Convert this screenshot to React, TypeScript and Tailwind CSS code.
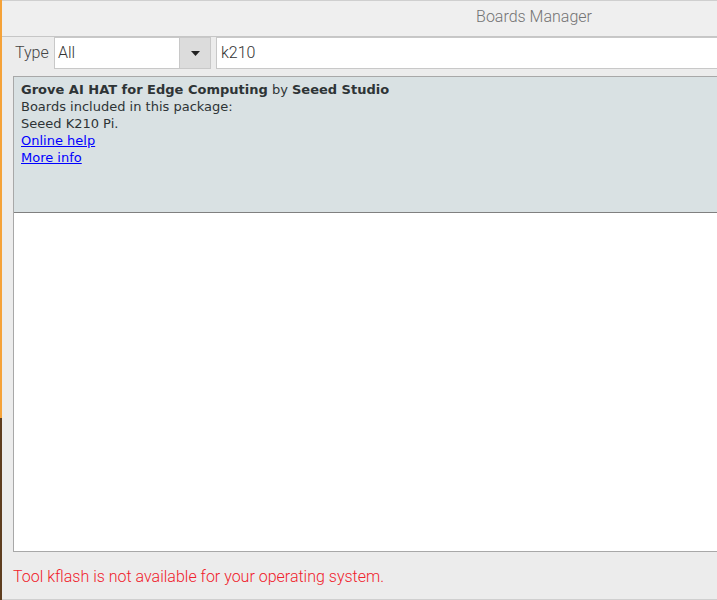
import React from "react";

export default function App() {
  return (
    <div className="flex w-[717px] h-[600px] overflow-hidden bg-[#ececec]">
      <div className="flex flex-col w-[2px] shrink-0">
        <div className="h-[418px] bg-[#f5a238]" />
        <div className="flex-1 bg-[#5e3d1f]" />
      </div>
      <div className="flex flex-col flex-1 min-w-0 border-t border-b border-[#cfcfcf] font-['Roboto',sans-serif]">
        <div className="h-[36px] shrink-0 bg-[#efefef] border-b border-[#c6c6c6] flex items-center">
          <div className="w-[1064px] shrink-0 text-center text-[16px] text-[#737373] font-light pb-[4px]">Boards Manager</div>
        </div>
        <div className="flex items-center h-[32px] shrink-0">
          <div className="w-[52px] pl-[13px] text-[16px] text-[#444] font-light">Type</div>
          <div className="flex w-[157px] h-[32px] border border-[#c8c8c8] bg-white">
            <div className="flex-1 pl-[3px] text-[16px] text-[#333] font-light leading-[30px]">All</div>
            <div className="w-[31px] bg-[#dcdcdc] border-l border-[#c8c8c8] flex items-center justify-center">
              <svg width="9" height="5" viewBox="0 0 9 5"><path d="M0 0h9L4.5 5z" fill="#222" /></svg>
            </div>
          </div>
          <div className="ml-[5px] flex-1 h-[32px] border border-[#c8c8c8] border-r-0 bg-white pl-[4px] text-[16px] text-[#333] font-light leading-[30px]">k210</div>
        </div>
        <div className="ml-[11px] mt-[7px] h-[476px] shrink-0 border border-[#a8a8a8] border-r-0 bg-white flex flex-col font-['DejaVu_Sans',sans-serif] text-[13px] text-[#2e3436]">
          <div className="h-[136px] shrink-0 bg-[#d9e1e3] border-b border-[#808080] pl-[7px] pt-[4px] leading-[17px]">
            <div><span className="font-bold">Grove AI HAT for Edge Computing</span> by <span className="font-bold">Seeed Studio</span></div>
            <div>Boards included in this package:</div>
            <div>Seeed K210 Pi.</div>
            <div><a className="text-[#0000ff] underline">Online help</a></div>
            <div><a className="text-[#0000ff] underline">More info</a></div>
          </div>
        </div>
        <div className="pl-[11px] pt-[13px] text-[16px] font-light text-[#f0202a]">Tool kflash is not available for your operating system.</div>
      </div>
    </div>
  );
}
